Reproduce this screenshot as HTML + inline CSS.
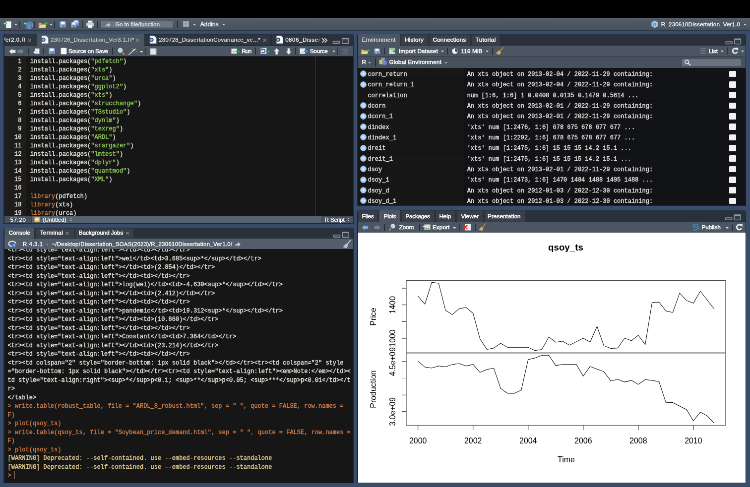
<!DOCTYPE html>
<html><head><meta charset="utf-8"><title>RStudio</title><style>
html,body{margin:0;padding:0;background:#000;}
body{width:750px;height:487px;overflow:hidden;position:relative;}
#app{position:absolute;left:0;top:0;width:1512px;height:982px;transform:scale(0.496032);transform-origin:0 0;overflow:hidden;will-change:transform;font-family:"Liberation Sans",sans-serif;}
#app div,#app pre{box-sizing:border-box;}
.m{font-family:"Liberation Mono",monospace;font-size:12px;-webkit-text-stroke:0.4px;}
.s{color:#8fcd58}.k{color:#d57d42}.n{color:#e6e1dc}
.o{color:#e6e1dc}.c{color:#d27d45}.w{color:#e4c98e}
</style></head><body><div id="app">
<div style="position:absolute;left:0.00px;top:0.00px;width:1512.00px;height:982.20px;background:#394c6b;"></div>
<div style="position:absolute;left:0.00px;top:0.00px;width:1512.00px;height:36.09px;background:#000;"></div>
<div style="position:absolute;left:0.00px;top:36.09px;width:1512.00px;height:23.59px;background:linear-gradient(#606a75 0,#525c68 10%,#485260 100%);"></div>
<div style="position:absolute;left:0.00px;top:59.67px;width:1512.00px;height:2.82px;background:#2b3646;"></div>
<div style="position:absolute;left:7.46px;top:68.14px;width:705.40px;height:382.44px;background:#1c2736;border-radius:4.5px 4.5px 0 0;"></div>
<div style="position:absolute;left:7.46px;top:458.84px;width:705.40px;height:515.09px;background:#1c2736;border-radius:4.5px 4.5px 0 0;"></div>
<div style="position:absolute;left:720.12px;top:68.14px;width:784.02px;height:346.55px;background:#1c2736;border-radius:4.5px 4.5px 0 0;"></div>
<div style="position:absolute;left:720.12px;top:423.56px;width:784.02px;height:550.37px;background:#1c2736;border-radius:4.5px 4.5px 0 0;"></div>
<svg style="position:absolute;left:29.23px;top:47.78px;overflow:visible" width="6.05" height="3.33" viewBox="0 0 6 3.3"><path d="M0 0 L6 0 L3 3.3 Z" fill="#dfe3e8"/></svg>
<div style="position:absolute;left:38.51px;top:41.93px;width:1.61px;height:13.71px;background:#27303a;"></div>
<div style="position:absolute;left:68.75px;top:41.93px;width:1.61px;height:13.71px;background:#27303a;"></div>
<svg style="position:absolute;left:100.20px;top:47.78px;overflow:visible" width="6.05" height="3.33" viewBox="0 0 6 3.3"><path d="M0 0 L6 0 L3 3.3 Z" fill="#dfe3e8"/></svg>
<div style="position:absolute;left:109.07px;top:41.93px;width:1.61px;height:13.71px;background:#27303a;"></div>
<div style="position:absolute;left:165.51px;top:41.93px;width:1.61px;height:13.71px;background:#27303a;"></div>
<div style="position:absolute;left:195.75px;top:41.93px;width:1.61px;height:13.71px;background:#27303a;"></div>
<div style="position:absolute;left:202.81px;top:42.34px;width:146.56px;height:13.91px;background:#6a7683;border-radius:1px;box-shadow:inset 0 0 0 0.6px #555f6b;"></div>
<svg style="position:absolute;left:210.87px;top:45.16px;overflow:visible" width="13.31" height="10.08" viewBox="0 0 12.6 11.6"><path d="M0 10.6 q0.6 -6.6 7 -6.6 v-3.6 l5.6 5.6 l-5.6 5.6 v-3.6 q-4.4 -0.6 -7 2.6z" fill="#b9c1ca"/></svg>
<div style="position:absolute;left:232.44px;top:41.39px;height:16px;line-height:16px;white-space:pre;font-family:'Liberation Sans', sans-serif;font-size:11px;color:#e4e7eb;-webkit-text-stroke:0.25px;letter-spacing:0.206px;-webkit-text-stroke:0.3px;">Go to file/function</div>
<div style="position:absolute;left:357.03px;top:41.33px;width:1.61px;height:15.12px;background:#27303a;"></div>
<svg style="position:absolute;left:367.52px;top:42.34px;overflow:visible" width="13.91" height="12.90" viewBox="0 0 14 14"><rect x="0" y="0" width="14" height="14" fill="#7d8792"/><rect x="1.3" y="1.3" width="5" height="5" fill="#a9b1ba"/><rect x="7.7" y="1.3" width="5" height="5" fill="#a9b1ba"/><rect x="1.3" y="7.7" width="5" height="5" fill="#a9b1ba"/><rect x="7.7" y="7.7" width="5" height="5" fill="#a9b1ba"/></svg>
<svg style="position:absolute;left:389.29px;top:47.78px;overflow:visible" width="6.05" height="3.33" viewBox="0 0 6 3.3"><path d="M0 0 L6 0 L3 3.3 Z" fill="#dfe3e8"/></svg>
<div style="position:absolute;left:403.80px;top:41.19px;height:16px;line-height:16px;white-space:pre;font-family:'Liberation Sans', sans-serif;font-size:12px;color:#fff;-webkit-text-stroke:0.25px;letter-spacing:0.033px;-webkit-text-stroke:0.35px;">Addins</div>
<svg style="position:absolute;left:448.16px;top:47.98px;overflow:visible" width="6.05" height="3.33" viewBox="0 0 6 3.3"><path d="M0 0 L6 0 L3 3.3 Z" fill="#dfe3e8"/></svg>
<svg style="position:absolute;left:1313.22px;top:41.13px;overflow:visible" width="14.11" height="15.72" viewBox="0 0 14 15.5"><path d="M7 0.5 L13.5 4 V11.5 L7 15 L0.5 11.5 V4Z" fill="#9fc3e0" stroke="#6e9cc4" stroke-width="0.8"/><text x="7" y="11.3" font-family="Liberation Sans" font-weight="bold" font-size="9" fill="#4a7fb0" text-anchor="middle">R</text></svg>
<div style="position:absolute;left:1332.78px;top:41.19px;height:16px;line-height:16px;white-space:pre;font-family:'Liberation Sans', sans-serif;font-size:11.5px;color:#fff;-webkit-text-stroke:0.25px;letter-spacing:0.223px;">R_230610Dissertation_Ver1.0</div>
<svg style="position:absolute;left:1498.69px;top:47.98px;overflow:visible" width="6.05" height="3.33" viewBox="0 0 6 3.3"><path d="M0 0 L6 0 L3 3.3 Z" fill="#dfe3e8"/></svg>
<div style="position:absolute;left:9.07px;top:68.34px;width:702.78px;height:23.99px;background:#29313b;border-radius:4px 4px 0 0;"></div>
<div style="position:absolute;left:9.07px;top:68.34px;width:64.11px;height:23.99px;background:#2d353f;border-radius:4px 0 0 0;overflow:hidden;"></div>
<div style="position:absolute;left:9.07px;top:68.54px;width:45.36px;height:23.18px;background:transparent;overflow:hidden;"><div style="position:absolute;left:-5.5px;top:3.89px;line-height:16px;font-family:'Liberation Sans', sans-serif;font-size:11.5px;-webkit-text-stroke:0.3px;color:#fff;white-space:pre;letter-spacing:0.45px">Ver2.0.R</div></div>
<div style="position:absolute;left:74.19px;top:68.34px;width:216.52px;height:24.80px;background:#4c5662;border-radius:3px 3px 0 0;"></div>
<div style="position:absolute;left:102.01px;top:72.24px;height:16px;line-height:16px;white-space:pre;font-family:'Liberation Sans', sans-serif;font-size:11.5px;color:#c3cad2;-webkit-text-stroke:0.25px;letter-spacing:0.263px;">230726_Dissertation_Ver3.1.R*</div>
<div style="position:absolute;left:291.72px;top:68.95px;width:254.62px;height:23.39px;background:#2d353f;box-shadow:inset 0 0 0 0.6px #222931;"></div>
<div style="position:absolute;left:320.14px;top:72.24px;height:16px;line-height:16px;white-space:pre;font-family:'Liberation Sans', sans-serif;font-size:11.5px;color:#e3e7eb;-webkit-text-stroke:0.25px;letter-spacing:0.243px;">230728_DissertationCovariance_ve...*</div>
<div style="position:absolute;left:547.34px;top:68.95px;width:99.79px;height:23.39px;background:#2d353f;box-shadow:inset 0 0 0 0.6px #222931;"></div>
<div style="position:absolute;left:575.16px;top:70.56px;width:71.97px;height:20.16px;background:transparent;overflow:hidden;"><div style="position:absolute;left:0;top:1.68px;line-height:16px;font-family:'Liberation Sans', sans-serif;font-size:11.5px;color:#fff;-webkit-text-stroke:0.25px;white-space:pre;letter-spacing:0.55px">0806_Dissertation</div><div style="position:absolute;right:0;top:0;width:9px;height:100%;background:linear-gradient(90deg,rgba(45,53,63,0),#2d353f)"></div></div>
<div style="position:absolute;left:9.07px;top:92.74px;width:702.78px;height:20.76px;background:#4c5662;"></div>
<svg style="position:absolute;left:18.14px;top:97.57px;overflow:visible" width="13.71" height="11.29" viewBox="0 0 13.6 11.2"><path d="M0.6 5.6 L6.4 0.4 V2.8 H13 V8.4 H6.4 V10.8 Z" fill="#e9edf1" stroke="#aab1b9" stroke-width="0.7"/></svg>
<svg style="position:absolute;left:35.28px;top:97.57px;overflow:visible" width="13.71" height="11.29" viewBox="0 0 13.6 11.2"><path d="M13 5.6 L7.2 0.4 V2.8 H0.6 V8.4 H7.2 V10.8 Z" fill="#78828d" stroke="#6a747f" stroke-width="0.7"/></svg>
<div style="position:absolute;left:56.65px;top:95.96px;width:1.61px;height:14.52px;background:#27303a;"></div>
<svg style="position:absolute;left:66.12px;top:97.37px;overflow:visible" width="14.52" height="11.89" viewBox="0 0 15 13.6"><rect x="4" y="1" width="10.5" height="12" fill="#e9edf1" stroke="#9aa3ad" stroke-width="0.6"/><path d="M0.5 9.5 L4.5 6 V8 H7.5 V11 H4.5 V13Z" fill="#fff" stroke="#7d8792" stroke-width="0.5"/></svg>
<div style="position:absolute;left:86.89px;top:95.96px;width:1.61px;height:14.52px;background:#27303a;"></div>
<div style="position:absolute;left:122.57px;top:96.97px;width:11.89px;height:12.30px;background:#fafafa;border-radius:1.2px;box-shadow:0 0 0 0.5px #c4c9cf;"></div>
<div style="position:absolute;left:137.89px;top:95.22px;height:16px;line-height:16px;white-space:pre;font-family:'Liberation Sans', sans-serif;font-size:11.8px;color:#fff;-webkit-text-stroke:0.25px;letter-spacing:-0.281px;-webkit-text-stroke:0.55px;">Source on Save</div>
<div style="position:absolute;left:225.99px;top:95.96px;width:1.61px;height:14.52px;background:#27303a;"></div>
<svg style="position:absolute;left:236.88px;top:95.96px;overflow:visible" width="14.72" height="14.92" viewBox="0 0 14.6 14.8"><circle cx="5.4" cy="5.4" r="4.2" fill="#b9d6f0" stroke="#dfe5ec" stroke-width="1.3"/><path d="M8.6 8.6 L13.4 13.8" stroke="#b08a4f" stroke-width="2.4" stroke-linecap="round"/></svg>
<svg style="position:absolute;left:259.46px;top:95.96px;overflow:visible" width="17.94" height="14.92" viewBox="0 0 18 15"><path d="M1 14 L12 4" stroke="#c9ced4" stroke-width="1.8" stroke-linecap="round"/><path d="M9.6 6.2 L12 4" stroke="#f3f3f3" stroke-width="2.2" stroke-linecap="round"/><path d="M14 1 l0.6 1.6 l1.6 0.6 l-1.6 0.6 l-0.6 1.6 l-0.6 -1.6 l-1.6 -0.6 l1.6 -0.6z M8 0.5 l0.4 1 l1 0.4 l-1 0.4 l-0.4 1 l-0.4 -1 l-1 -0.4 l1 -0.4z M16 7 l0.4 1 l1 0.4 l-1 0.4 l-0.4 1 l-0.4 -1 l-1 -0.4 l1 -0.4z" fill="#e9c76b"/></svg>
<svg style="position:absolute;left:281.84px;top:103.22px;overflow:visible" width="6.05" height="3.33" viewBox="0 0 6 3.3"><path d="M0 0 L6 0 L3 3.3 Z" fill="#dfe3e8"/></svg>
<div style="position:absolute;left:292.52px;top:95.96px;width:1.61px;height:14.52px;background:#27303a;"></div>
<svg style="position:absolute;left:302.40px;top:96.57px;overflow:visible" width="13.71" height="13.91" viewBox="0 0 13.6 13.8"><rect x="0.5" y="0.5" width="12.6" height="12.8" rx="1" fill="#cfd4da" stroke="#8e98a3" stroke-width="0.8"/><rect x="2.4" y="2.6" width="8.8" height="8.6" fill="#e4e7ea"/></svg>
<svg style="position:absolute;left:466.30px;top:97.17px;overflow:visible" width="17.94" height="12.50" viewBox="0 0 18 12.4"><rect x="0.5" y="1" width="11" height="10" fill="#f4f5f6" stroke="#9aa3ad" stroke-width="0.7"/><path d="M2.4 4 h7 M2.4 6.5 h7 M2.4 9 h5" stroke="#9aa3ad" stroke-width="0.8"/><path d="M10 6 h4 v-2.6 l4 3.6 l-4 3.6 v-2.6 h-4z" fill="#2fa84f" stroke="#14602a" stroke-width="0.4"/></svg>
<div style="position:absolute;left:487.27px;top:95.22px;height:16px;line-height:16px;white-space:pre;font-family:'Liberation Sans', sans-serif;font-size:11.8px;color:#fff;-webkit-text-stroke:0.25px;letter-spacing:-0.765px;-webkit-text-stroke:0.55px;">Run</div>
<div style="position:absolute;left:514.28px;top:95.96px;width:1.61px;height:14.52px;background:#27303a;"></div>
<svg style="position:absolute;left:524.76px;top:96.36px;overflow:visible" width="19.76" height="14.11" viewBox="0 0 19.6 14"><rect x="0.5" y="0.8" width="11.6" height="11.6" fill="#eef1f4" stroke="#8e98a3" stroke-width="0.7"/><path d="M3 4.4 a3.6 3.6 0 1 1 -0.4 4" stroke="#2c4f8a" stroke-width="1.9" fill="none"/><path d="M0.8 1.6 L5.8 2.6 L2.6 6.8Z" fill="#2c4f8a"/><path d="M11.4 7 h3.6 v-2.4 l4 3.4 l-4 3.4 v-2.4 h-3.6z" fill="#2fa84f" stroke="#14602a" stroke-width="0.4"/></svg>
<svg style="position:absolute;left:551.78px;top:96.77px;overflow:visible" width="11.49" height="13.31" viewBox="0 0 11.4 13.2"><path d="M5.7 0.6 L11 6.2 H7.9 V12.6 H3.5 V6.2 H0.4Z" fill="#f1f3f5" stroke="#aab1b9" stroke-width="0.6"/></svg>
<svg style="position:absolute;left:576.17px;top:96.77px;overflow:visible" width="12.10" height="13.31" viewBox="0 0 11.4 13.2"><path d="M5.7 12.6 L11 7 H7.9 V0.6 H3.5 V7 H0.4Z" fill="#f1f3f5" stroke="#aab1b9" stroke-width="0.6"/></svg>
<div style="position:absolute;left:594.92px;top:95.96px;width:1.61px;height:14.52px;background:#27303a;"></div>
<svg style="position:absolute;left:604.40px;top:97.17px;overflow:visible" width="18.14" height="12.50" viewBox="0 0 18 12.4"><rect x="0.5" y="0.6" width="10.5" height="11" fill="#f4f5f6" stroke="#9aa3ad" stroke-width="0.7"/><path d="M2.4 3.4 h6.6 M2.4 6 h6.6 M2.4 8.6 h6.6" stroke="#aab1b9" stroke-width="0.8"/><path d="M9 5 h4.4 v-2.6 l4.2 3.8 l-4.2 3.8 v-2.6 h-4.4z" fill="#4a8fd6" stroke="#1f5a9c" stroke-width="0.4"/></svg>
<div style="position:absolute;left:624.76px;top:95.22px;height:16px;line-height:16px;white-space:pre;font-family:'Liberation Sans', sans-serif;font-size:11.8px;color:#fff;-webkit-text-stroke:0.25px;letter-spacing:-0.284px;-webkit-text-stroke:0.55px;">Source</div>
<svg style="position:absolute;left:669.92px;top:102.41px;overflow:visible" width="6.05" height="3.33" viewBox="0 0 6 3.3"><path d="M0 0 L6 0 L3 3.3 Z" fill="#dfe3e8"/></svg>
<div style="position:absolute;left:679.59px;top:95.96px;width:1.61px;height:14.52px;background:#27303a;"></div>
<svg style="position:absolute;left:690.28px;top:97.98px;overflow:visible" width="11.69" height="10.48" viewBox="0 0 11.6 10.4"><path d="M0 1.2 h11.6 M3 5.2 h8.6 M0 9.2 h11.6" stroke="#6d7783" stroke-width="1.5"/></svg>
<div style="position:absolute;left:9.07px;top:113.50px;width:702.78px;height:321.75px;background:#161616;"></div>
<div style="position:absolute;left:9.07px;top:113.50px;width:44.15px;height:321.75px;background:#1f1d1c;"></div>
<div style="position:absolute;left:636.05px;top:113.50px;width:1.41px;height:321.75px;background:#3c3c3c;"></div>
<div style="position:absolute;left:9.07px;top:113.50px;width:702.78px;height:321.75px;overflow:hidden;font-family:'Liberation Mono', monospace;font-size:12px;line-height:17px;color:#e6e1dc"><pre class="m" style="position:absolute;left:9.27px;top:2.39px;width:25.20px;text-align:right;color:#e6e1dc;margin:0">1
2
3
4
5
6
7
8
9
10
11
12
13
14
15
16
17
18
19</pre><pre class="m" style="position:absolute;left:51.81px;top:2.39px;margin:0">install.packages(<span class="s">"pdfetch"</span>)
install.packages(<span class="s">"xts"</span>)
install.packages(<span class="s">"urca"</span>)
install.packages(<span class="s">"ggplot2"</span>)
install.packages(<span class="s">"xts"</span>)
install.packages(<span class="s">"strucchange"</span>)
install.packages(<span class="s">"TSstudio"</span>)
install.packages(<span class="s">"dynlm"</span>)
install.packages(<span class="s">"texreg"</span>)
install.packages(<span class="s">"ARDL"</span>)
install.packages(<span class="s">"srargazer"</span>)
install.packages(<span class="s">"lmtest"</span>)
install.packages(<span class="s">"dplyr"</span>)
install.packages(<span class="s">"quantmod"</span>)
install.packages(<span class="s">"XML"</span>)

<span class="k">library</span>(<span class="n">pdfetch</span>)
<span class="k">library</span>(<span class="n">xts</span>)
<span class="k">library</span>(<span class="n">urca</span>)</pre></div>
<div style="position:absolute;left:9.07px;top:435.46px;width:702.78px;height:14.31px;background:#566270;"></div>
<div style="position:absolute;left:9.07px;top:435.46px;width:55.04px;height:14.31px;background:#47515e;"></div>
<div style="position:absolute;left:20.76px;top:434.92px;height:16px;line-height:16px;white-space:pre;font-family:'Liberation Sans', sans-serif;font-size:11.2px;color:#fff;-webkit-text-stroke:0.25px;letter-spacing:0.725px;-webkit-text-stroke:0.35px;">57:20</div>
<div style="position:absolute;left:62.70px;top:436.26px;width:1.61px;height:12.90px;background:#39434f;"></div>
<svg style="position:absolute;left:69.35px;top:437.27px;overflow:visible" width="11.49" height="11.09" viewBox="0 0 11.4 10.8"><rect x="0.4" y="0.4" width="10.6" height="10" rx="1" fill="#e9b44c" stroke="#b98a2e" stroke-width="0.6"/><path d="M2 3 h7.4 M2 5.4 h7.4 M2 7.8 h5" stroke="#fff3d6" stroke-width="0.9"/></svg>
<div style="position:absolute;left:86.08px;top:434.92px;height:16px;line-height:16px;white-space:pre;font-family:'Liberation Sans', sans-serif;font-size:11.2px;color:#fff;-webkit-text-stroke:0.25px;letter-spacing:0.254px;-webkit-text-stroke:0.35px;">(Untitled)</div>
<svg style="position:absolute;left:140.52px;top:439.29px;overflow:visible" width="4.44" height="7.26" viewBox="0 0 4.4 7.2"><path d="M0.4 2.6 L2.2 0.4 L4 2.6Z M0.4 4.6 L2.2 6.8 L4 4.6Z" fill="#c9ced4"/></svg>
<div style="position:absolute;left:647.74px;top:435.86px;width:63.91px;height:13.71px;background:#4a5461;box-shadow:inset 0 0 0 0.5px #3b4551;border-radius:1px;"></div>
<div style="position:absolute;left:654.80px;top:434.92px;height:16px;line-height:16px;white-space:pre;font-family:'Liberation Sans', sans-serif;font-size:11.2px;color:#fff;-webkit-text-stroke:0.25px;letter-spacing:-0.014px;-webkit-text-stroke:0.35px;">R Script</div>
<svg style="position:absolute;left:700.36px;top:439.29px;overflow:visible" width="4.44" height="7.26" viewBox="0 0 4.4 7.2"><path d="M0.4 2.6 L2.2 0.4 L4 2.6Z M0.4 4.6 L2.2 6.8 L4 4.6Z" fill="#c9ced4"/></svg>
<div style="position:absolute;left:9.07px;top:459.04px;width:702.78px;height:22.38px;background:#29313b;border-radius:4px 4px 0 0;"></div>
<div style="position:absolute;left:9.07px;top:459.04px;width:59.88px;height:22.78px;background:#4c5662;border-radius:3px 3px 0 0;"></div>
<div style="position:absolute;left:17.54px;top:461.32px;height:16px;line-height:16px;white-space:pre;font-family:'Liberation Sans', sans-serif;font-size:11.8px;color:#fff;-webkit-text-stroke:0.25px;letter-spacing:0.036px;-webkit-text-stroke:0.55px;">Console</div>
<div style="position:absolute;left:70.56px;top:459.65px;width:79.03px;height:21.77px;background:#373f48;box-shadow:inset 0 0 0 0.6px #252c35;"></div>
<div style="position:absolute;left:80.64px;top:461.32px;height:16px;line-height:16px;white-space:pre;font-family:'Liberation Sans', sans-serif;font-size:11.8px;color:#fff;-webkit-text-stroke:0.25px;letter-spacing:0.222px;-webkit-text-stroke:0.55px;">Terminal</div>
<div style="position:absolute;left:151.20px;top:459.65px;width:118.74px;height:21.77px;background:#373f48;box-shadow:inset 0 0 0 0.6px #252c35;"></div>
<div style="position:absolute;left:158.66px;top:461.32px;height:16px;line-height:16px;white-space:pre;font-family:'Liberation Sans', sans-serif;font-size:11.8px;color:#fff;-webkit-text-stroke:0.25px;letter-spacing:-0.098px;-webkit-text-stroke:0.55px;">Background Jobs</div>
<div style="position:absolute;left:9.07px;top:481.42px;width:702.78px;height:20.56px;background:#535e6a;"></div>
<svg style="position:absolute;left:16.73px;top:484.65px;overflow:visible" width="17.14" height="14.52" viewBox="0 0 17 14.4"><ellipse cx="7.6" cy="6.4" rx="7" ry="5" fill="none" stroke="#e8ecf0" stroke-width="2.4"/><rect x="7" y="5.6" width="8.4" height="8" rx="1.2" fill="#2f6fd0"/><text x="11.2" y="12.4" font-size="7.5" font-weight="bold" font-family="Liberation Sans" fill="#9cc0f5" text-anchor="middle">R</text></svg>
<div style="position:absolute;left:45.96px;top:483.90px;height:16px;line-height:16px;white-space:pre;font-family:'Liberation Sans', sans-serif;font-size:11.4px;color:#fff;-webkit-text-stroke:0.25px;letter-spacing:0.567px;-webkit-text-stroke:0.35px;">R 4.3.1</div>
<div style="position:absolute;left:93.95px;top:483.90px;height:16px;line-height:16px;white-space:pre;font-family:'Liberation Sans', sans-serif;font-size:11px;color:#c9ced4;-webkit-text-stroke:0.25px;">·</div>
<div style="position:absolute;left:104.23px;top:483.90px;height:16px;line-height:16px;white-space:pre;font-family:'Liberation Sans', sans-serif;font-size:11.4px;color:#fff;-webkit-text-stroke:0.25px;letter-spacing:0.324px;-webkit-text-stroke:0.35px;">~/Desktop/Dissertation_SOAS(2023)/R_230610Dissertation_Ver1.0/</div>
<svg style="position:absolute;left:473.16px;top:486.66px;overflow:visible" width="12.30" height="10.48" viewBox="0 0 12.2 10.4"><path d="M0.6 10 q0.4 -6 6 -6 v-3.4 l5.2 5 l-5.2 5 v-3.4 q-4 -0.4 -6 2.8z" fill="#c9ced4"/></svg>
<div style="position:absolute;left:9.07px;top:501.98px;width:702.78px;height:471.14px;background:#161616;"></div>
<div style="position:absolute;left:9.07px;top:501.98px;width:702.78px;height:471.14px;overflow:hidden;font-family:'Liberation Mono', monospace;font-size:12px;line-height:17.5px;color:#e6e1dc"><pre class="m" style="position:absolute;left:6.45px;top:-5.92px;margin:0"><span class="o">&lt;tr&gt;&lt;td style="text-align:left"&gt;&lt;/td&gt;&lt;td&gt;&lt;/td&gt;&lt;/tr&gt;</span>
<span class="o">&lt;tr&gt;&lt;td style="text-align:left"&gt;wei&lt;/td&gt;&lt;td&gt;3.685&lt;sup&gt;*&lt;/sup&gt;&lt;/td&gt;&lt;/tr&gt;</span>
<span class="o">&lt;tr&gt;&lt;td style="text-align:left"&gt;&lt;/td&gt;&lt;td&gt;(2.854)&lt;/td&gt;&lt;/tr&gt;</span>
<span class="o">&lt;tr&gt;&lt;td style="text-align:left"&gt;&lt;/td&gt;&lt;td&gt;&lt;/td&gt;&lt;/tr&gt;</span>
<span class="o">&lt;tr&gt;&lt;td style="text-align:left"&gt;log(wei)&lt;/td&gt;&lt;td&gt;-4.630&lt;sup&gt;*&lt;/sup&gt;&lt;/td&gt;&lt;/tr&gt;</span>
<span class="o">&lt;tr&gt;&lt;td style="text-align:left"&gt;&lt;/td&gt;&lt;td&gt;(2.412)&lt;/td&gt;&lt;/tr&gt;</span>
<span class="o">&lt;tr&gt;&lt;td style="text-align:left"&gt;&lt;/td&gt;&lt;td&gt;&lt;/td&gt;&lt;/tr&gt;</span>
<span class="o">&lt;tr&gt;&lt;td style="text-align:left"&gt;pandemic&lt;/td&gt;&lt;td&gt;19.312&lt;sup&gt;*&lt;/sup&gt;&lt;/td&gt;&lt;/tr&gt;</span>
<span class="o">&lt;tr&gt;&lt;td style="text-align:left"&gt;&lt;/td&gt;&lt;td&gt;(10.860)&lt;/td&gt;&lt;/tr&gt;</span>
<span class="o">&lt;tr&gt;&lt;td style="text-align:left"&gt;&lt;/td&gt;&lt;td&gt;&lt;/td&gt;&lt;/tr&gt;</span>
<span class="o">&lt;tr&gt;&lt;td style="text-align:left"&gt;Constant&lt;/td&gt;&lt;td&gt;7.364&lt;/td&gt;&lt;/tr&gt;</span>
<span class="o">&lt;tr&gt;&lt;td style="text-align:left"&gt;&lt;/td&gt;&lt;td&gt;(23.214)&lt;/td&gt;&lt;/tr&gt;</span>
<span class="o">&lt;tr&gt;&lt;td style="text-align:left"&gt;&lt;/td&gt;&lt;td&gt;&lt;/td&gt;&lt;/tr&gt;</span>
<span class="o">&lt;tr&gt;&lt;td colspan="2" style="border-bottom: 1px solid black"&gt;&lt;/td&gt;&lt;/tr&gt;&lt;tr&gt;&lt;td colspan="2" style</span>
<span class="o">="border-bottom: 1px solid black"&gt;&lt;/td&gt;&lt;/tr&gt;&lt;tr&gt;&lt;td style="text-align:left"&gt;&lt;em&gt;Note:&lt;/em&gt;&lt;/td&gt;&lt;</span>
<span class="o">td style="text-align:right"&gt;&lt;sup&gt;*&lt;/sup&gt;p&lt;0.1; &lt;sup&gt;**&lt;/sup&gt;p&lt;0.05; &lt;sup&gt;***&lt;/sup&gt;p&lt;0.01&lt;/td&gt;&lt;/t</span>
<span class="o">r&gt;</span>
<span class="o">&lt;/table&gt;</span>
<span class="c">&gt; write.table(robust_table, file = "ARDL_8_robust.html", sep = " ", quote = FALSE, row.names =</span>
<span class="c">F)</span>
<span class="c">&gt; plot(qsoy_ts)</span>
<span class="c">&gt; write.table(qsoy_ts, file = "Soybean_price_demand.html", sep = " ", quote = FALSE, row.names =</span>
<span class="c">F)</span>
<span class="c">&gt; plot(qsoy_ts)</span>
<span class="w">[WARNING] Deprecated: --self-contained. use --embed-resources --standalone</span>
<span class="w">[WARNING] Deprecated: --self-contained. use --embed-resources --standalone</span>
<span class="c">&gt; </span>
</pre><div style="position:absolute;left:20.16px;top:446.75px;width:1px;height:17.34px;background:#8a7a6a"></div></div>
<div style="position:absolute;left:721.73px;top:68.34px;width:781.40px;height:23.99px;background:#29313b;border-radius:4px 4px 0 0;"></div>
<div style="position:absolute;left:721.73px;top:68.34px;width:84.27px;height:24.39px;background:#4c5662;border-radius:3px 3px 0 0;"></div>
<div style="position:absolute;left:729.79px;top:72.24px;height:16px;line-height:16px;white-space:pre;font-family:'Liberation Sans', sans-serif;font-size:11.8px;color:#dfe3e7;-webkit-text-stroke:0.25px;letter-spacing:0.117px;-webkit-text-stroke:0.3px;">Environment</div>
<div style="position:absolute;left:808.21px;top:68.95px;width:55.04px;height:22.98px;background:#373f48;box-shadow:inset 0 0 0 0.6px #252c35;border-radius:2px 2px 0 0;"></div>
<div style="position:absolute;left:815.88px;top:72.24px;height:16px;line-height:16px;white-space:pre;font-family:'Liberation Sans', sans-serif;font-size:11.8px;color:#fff;-webkit-text-stroke:0.25px;letter-spacing:0.227px;-webkit-text-stroke:0.55px;">History</div>
<div style="position:absolute;left:864.86px;top:68.95px;width:83.06px;height:22.98px;background:#373f48;box-shadow:inset 0 0 0 0.6px #252c35;border-radius:2px 2px 0 0;"></div>
<div style="position:absolute;left:872.52px;top:72.24px;height:16px;line-height:16px;white-space:pre;font-family:'Liberation Sans', sans-serif;font-size:11.8px;color:#fff;-webkit-text-stroke:0.25px;letter-spacing:0.103px;-webkit-text-stroke:0.55px;">Connections</div>
<div style="position:absolute;left:949.94px;top:68.95px;width:58.06px;height:22.98px;background:#373f48;box-shadow:inset 0 0 0 0.6px #252c35;border-radius:2px 2px 0 0;"></div>
<div style="position:absolute;left:958.61px;top:72.24px;height:16px;line-height:16px;white-space:pre;font-family:'Liberation Sans', sans-serif;font-size:11.8px;color:#fff;-webkit-text-stroke:0.25px;letter-spacing:0.252px;-webkit-text-stroke:0.55px;">Tutorial</div>
<div style="position:absolute;left:721.73px;top:92.33px;width:781.40px;height:20.97px;background:#4c5662;"></div>
<div style="position:absolute;left:774.35px;top:95.56px;width:1.61px;height:14.92px;background:#27303a;"></div>
<svg style="position:absolute;left:783.62px;top:96.36px;overflow:visible" width="13.91" height="13.71" viewBox="0 0 14.6 13.6"><rect x="0.5" y="0.5" width="12.8" height="12.6" fill="#eef1f4" stroke="#7d8792" stroke-width="0.8"/><path d="M0.5 4.6 h12.8 M0.5 8.8 h12.8 M4.8 0.5 v12.6 M9 0.5 v12.6" stroke="#7d8792" stroke-width="0.7"/><rect x="0.9" y="0.9" width="12" height="3.0" fill="#8fc48f"/><path d="M8 6.6 h3.4 v-2 l3 2.8 l-3 2.8 v-2 h-3.4z" fill="#35a853" stroke="#14602a" stroke-width="0.3"/></svg>
<div style="position:absolute;left:803.98px;top:95.02px;height:16px;line-height:16px;white-space:pre;font-family:'Liberation Sans', sans-serif;font-size:11.8px;color:#fff;-webkit-text-stroke:0.25px;letter-spacing:0.103px;-webkit-text-stroke:0.55px;">Import Dataset</div>
<svg style="position:absolute;left:889.06px;top:102.21px;overflow:visible" width="6.05" height="3.33" viewBox="0 0 6 3.3"><path d="M0 0 L6 0 L3 3.3 Z" fill="#dfe3e8"/></svg>
<div style="position:absolute;left:901.35px;top:95.56px;width:1.61px;height:14.92px;background:#27303a;"></div>
<svg style="position:absolute;left:911.23px;top:96.77px;overflow:visible" width="12.30" height="12.30" viewBox="0 0 12 12"><circle cx="6" cy="6" r="5.4" fill="#f3f5f7" stroke="#c3c9d0" stroke-width="0.6"/><path d="M6 6 L6 0.6 A5.4 5.4 0 0 1 10.6 8.8Z" fill="#4a5563"/></svg>
<div style="position:absolute;left:929.58px;top:95.02px;height:16px;line-height:16px;white-space:pre;font-family:'Liberation Sans', sans-serif;font-size:11.8px;color:#fff;-webkit-text-stroke:0.25px;letter-spacing:0.104px;-webkit-text-stroke:0.55px;">116 MiB</div>
<svg style="position:absolute;left:979.37px;top:102.21px;overflow:visible" width="6.05" height="3.33" viewBox="0 0 6 3.3"><path d="M0 0 L6 0 L3 3.3 Z" fill="#dfe3e8"/></svg>
<div style="position:absolute;left:992.07px;top:95.56px;width:1.61px;height:14.92px;background:#27303a;"></div>
<svg style="position:absolute;left:1411.60px;top:96.77px;overflow:visible" width="10.68" height="11.69" viewBox="0 0 10.6 12"><path d="M0 1 h10.6 M0 4.6 h10.6 M0 8.2 h10.6 M0 11.4 h10.6" stroke="#7c8692" stroke-width="1.3"/></svg>
<div style="position:absolute;left:1428.74px;top:95.02px;height:16px;line-height:16px;white-space:pre;font-family:'Liberation Sans', sans-serif;font-size:11.8px;color:#fff;-webkit-text-stroke:0.25px;letter-spacing:-0.055px;-webkit-text-stroke:0.55px;">List</div>
<svg style="position:absolute;left:1453.33px;top:102.21px;overflow:visible" width="6.05" height="3.33" viewBox="0 0 6 3.3"><path d="M0 0 L6 0 L3 3.3 Z" fill="#dfe3e8"/></svg>
<div style="position:absolute;left:1465.83px;top:95.56px;width:1.61px;height:14.92px;background:#27303a;"></div>
<svg style="position:absolute;left:1475.31px;top:95.56px;overflow:visible" width="13.31" height="13.10" viewBox="0 0 13.4 13.2"><path d="M10.4 3.6 A4.7 4.7 0 1 0 11.2 8.6" fill="none" stroke="#e6eaee" stroke-width="2.9"/><path d="M7.6 0.2 L13.2 0.2 L13.2 6.2Z" fill="#e6eaee"/></svg>
<svg style="position:absolute;left:1493.86px;top:102.21px;overflow:visible" width="6.05" height="3.33" viewBox="0 0 6 3.3"><path d="M0 0 L6 0 L3 3.3 Z" fill="#dfe3e8"/></svg>
<div style="position:absolute;left:721.73px;top:113.90px;width:781.40px;height:22.78px;background:#47515d;"></div>
<div style="position:absolute;left:721.73px;top:113.30px;width:781.40px;height:0.81px;background:#333c47;"></div>
<div style="position:absolute;left:729.39px;top:117.19px;height:16px;line-height:16px;white-space:pre;font-family:'Liberation Sans', sans-serif;font-size:11.8px;color:#fff;-webkit-text-stroke:0.25px;letter-spacing:-1.466px;-webkit-text-stroke:0.55px;">R</div>
<svg style="position:absolute;left:741.89px;top:124.59px;overflow:visible" width="6.05" height="3.33" viewBox="0 0 6 3.3"><path d="M0 0 L6 0 L3 3.3 Z" fill="#aeb5bd"/></svg>
<div style="position:absolute;left:756.20px;top:116.93px;width:1.61px;height:16.93px;background:#27303a;"></div>
<div style="position:absolute;left:784.43px;top:117.19px;height:16px;line-height:16px;white-space:pre;font-family:'Liberation Sans', sans-serif;font-size:11.8px;color:#fff;-webkit-text-stroke:0.25px;letter-spacing:0.111px;-webkit-text-stroke:0.55px;">Global Environment</div>
<svg style="position:absolute;left:896.11px;top:124.59px;overflow:visible" width="6.05" height="3.33" viewBox="0 0 6 3.3"><path d="M0 0 L6 0 L3 3.3 Z" fill="#aeb5bd"/></svg>
<div style="position:absolute;left:1374.91px;top:118.54px;width:118.94px;height:14.52px;background:#69737f;border-radius:1.5px;"></div>
<svg style="position:absolute;left:1380.15px;top:120.15px;overflow:visible" width="12.50" height="12.10" viewBox="0 0 12.4 12"><circle cx="4.8" cy="4.8" r="3.6" fill="none" stroke="#e3e7ec" stroke-width="1.7"/><path d="M7.4 7.4 L11.4 11.2" stroke="#e3e7ec" stroke-width="2.2" stroke-linecap="round"/></svg>
<div style="position:absolute;left:721.73px;top:136.68px;width:781.40px;height:277.20px;background:#111317;"></div>
<div style="position:absolute;left:721.73px;top:136.68px;width:214.50px;height:277.20px;background:#181717;"></div>
<div style="position:absolute;left:721.73px;top:136.68px;width:781.40px;height:277.20px;overflow:hidden;font-family:'Liberation Mono', monospace;font-size:12px;color:#e6e1dc"><div style="position:absolute;left:0;top:22.86px;width:100%;height:1px;background:rgba(0,0,0,0.18)"></div><svg style="position:absolute;left:4.44px;top:5.80px" width="13" height="13" viewBox="0 0 12.2 12.2"><circle cx="6.1" cy="6.1" r="5.6" fill="#b0cdf0" stroke="#86abdc" stroke-width="0.9"/><path d="M4.6 3.6 L8.8 6.1 L4.6 8.6Z" fill="#eaf3fc"/></svg><div class="m" style="position:absolute;left:19.76px;top:5.50px;line-height:17px;white-space:pre">corn_return</div><div class="m" style="position:absolute;left:219.95px;top:5.50px;line-height:17px;white-space:pre">An xts object on 2013-02-04 / 2022-11-29 containing:</div><div style="position:absolute;left:748.74px;top:6.10px;width:13.10px;height:12.70px;background:#f2f2f2;border-radius:1.5px"></div><div style="position:absolute;left:0;top:44.18px;width:100%;height:1px;background:rgba(0,0,0,0.18)"></div><svg style="position:absolute;left:4.44px;top:27.12px" width="13" height="13" viewBox="0 0 12.2 12.2"><circle cx="6.1" cy="6.1" r="5.6" fill="#b0cdf0" stroke="#86abdc" stroke-width="0.9"/><path d="M4.6 3.6 L8.8 6.1 L4.6 8.6Z" fill="#eaf3fc"/></svg><div class="m" style="position:absolute;left:19.76px;top:26.82px;line-height:17px;white-space:pre">corn_return_1</div><div class="m" style="position:absolute;left:219.95px;top:26.82px;line-height:17px;white-space:pre">An xts object on 2013-02-04 / 2022-11-29 containing:</div><div style="position:absolute;left:748.74px;top:27.42px;width:13.10px;height:12.70px;background:#f2f2f2;border-radius:1.5px"></div><div style="position:absolute;left:0;top:65.50px;width:100%;height:1px;background:rgba(0,0,0,0.18)"></div><div class="m" style="position:absolute;left:19.76px;top:48.14px;line-height:17px;white-space:pre">correlation</div><div class="m" style="position:absolute;left:219.95px;top:48.14px;line-height:17px;white-space:pre">num [1:6, 1:6] 1 0.0408 0.0135 0.1479 0.5614 ...</div><div style="position:absolute;left:748.74px;top:48.74px;width:13.10px;height:12.70px;background:#f2f2f2;border-radius:1.5px"></div><div style="position:absolute;left:0;top:86.82px;width:100%;height:1px;background:rgba(0,0,0,0.18)"></div><svg style="position:absolute;left:4.44px;top:69.76px" width="13" height="13" viewBox="0 0 12.2 12.2"><circle cx="6.1" cy="6.1" r="5.6" fill="#b0cdf0" stroke="#86abdc" stroke-width="0.9"/><path d="M4.6 3.6 L8.8 6.1 L4.6 8.6Z" fill="#eaf3fc"/></svg><div class="m" style="position:absolute;left:19.76px;top:69.46px;line-height:17px;white-space:pre">dcorn</div><div class="m" style="position:absolute;left:219.95px;top:69.46px;line-height:17px;white-space:pre">An xts object on 2013-02-01 / 2022-11-29 containing:</div><div style="position:absolute;left:748.74px;top:70.06px;width:13.10px;height:12.70px;background:#f2f2f2;border-radius:1.5px"></div><div style="position:absolute;left:0;top:108.14px;width:100%;height:1px;background:rgba(0,0,0,0.18)"></div><svg style="position:absolute;left:4.44px;top:91.08px" width="13" height="13" viewBox="0 0 12.2 12.2"><circle cx="6.1" cy="6.1" r="5.6" fill="#b0cdf0" stroke="#86abdc" stroke-width="0.9"/><path d="M4.6 3.6 L8.8 6.1 L4.6 8.6Z" fill="#eaf3fc"/></svg><div class="m" style="position:absolute;left:19.76px;top:90.78px;line-height:17px;white-space:pre">dcorn_1</div><div class="m" style="position:absolute;left:219.95px;top:90.78px;line-height:17px;white-space:pre">An xts object on 2013-02-01 / 2022-11-29 containing:</div><div style="position:absolute;left:748.74px;top:91.38px;width:13.10px;height:12.70px;background:#f2f2f2;border-radius:1.5px"></div><div style="position:absolute;left:0;top:129.46px;width:100%;height:1px;background:rgba(0,0,0,0.18)"></div><svg style="position:absolute;left:4.44px;top:112.40px" width="13" height="13" viewBox="0 0 12.2 12.2"><circle cx="6.1" cy="6.1" r="5.6" fill="#b0cdf0" stroke="#86abdc" stroke-width="0.9"/><path d="M4.6 3.6 L8.8 6.1 L4.6 8.6Z" fill="#eaf3fc"/></svg><div class="m" style="position:absolute;left:19.76px;top:112.10px;line-height:17px;white-space:pre">dindex</div><div class="m" style="position:absolute;left:219.95px;top:112.10px;line-height:17px;white-space:pre">'xts' num [1:2476, 1:6] 678 675 678 677 677 ...</div><div style="position:absolute;left:748.74px;top:112.70px;width:13.10px;height:12.70px;background:#f2f2f2;border-radius:1.5px"></div><div style="position:absolute;left:0;top:150.78px;width:100%;height:1px;background:rgba(0,0,0,0.18)"></div><svg style="position:absolute;left:4.44px;top:133.72px" width="13" height="13" viewBox="0 0 12.2 12.2"><circle cx="6.1" cy="6.1" r="5.6" fill="#b0cdf0" stroke="#86abdc" stroke-width="0.9"/><path d="M4.6 3.6 L8.8 6.1 L4.6 8.6Z" fill="#eaf3fc"/></svg><div class="m" style="position:absolute;left:19.76px;top:133.42px;line-height:17px;white-space:pre">dindex_1</div><div class="m" style="position:absolute;left:219.95px;top:133.42px;line-height:17px;white-space:pre">'xts' num [1:2292, 1:6] 678 675 678 677 677 ...</div><div style="position:absolute;left:748.74px;top:134.02px;width:13.10px;height:12.70px;background:#f2f2f2;border-radius:1.5px"></div><div style="position:absolute;left:0;top:172.09px;width:100%;height:1px;background:rgba(0,0,0,0.18)"></div><svg style="position:absolute;left:4.44px;top:155.04px" width="13" height="13" viewBox="0 0 12.2 12.2"><circle cx="6.1" cy="6.1" r="5.6" fill="#b0cdf0" stroke="#86abdc" stroke-width="0.9"/><path d="M4.6 3.6 L8.8 6.1 L4.6 8.6Z" fill="#eaf3fc"/></svg><div class="m" style="position:absolute;left:19.76px;top:154.74px;line-height:17px;white-space:pre">dreit</div><div class="m" style="position:absolute;left:219.95px;top:154.74px;line-height:17px;white-space:pre">'xts' num [1:2475, 1:6] 15 15 15 14.2 15.1 ...</div><div style="position:absolute;left:748.74px;top:155.34px;width:13.10px;height:12.70px;background:#f2f2f2;border-radius:1.5px"></div><div style="position:absolute;left:0;top:193.41px;width:100%;height:1px;background:rgba(0,0,0,0.18)"></div><svg style="position:absolute;left:4.44px;top:176.35px" width="13" height="13" viewBox="0 0 12.2 12.2"><circle cx="6.1" cy="6.1" r="5.6" fill="#b0cdf0" stroke="#86abdc" stroke-width="0.9"/><path d="M4.6 3.6 L8.8 6.1 L4.6 8.6Z" fill="#eaf3fc"/></svg><div class="m" style="position:absolute;left:19.76px;top:176.05px;line-height:17px;white-space:pre">dreit_1</div><div class="m" style="position:absolute;left:219.95px;top:176.05px;line-height:17px;white-space:pre">'xts' num [1:2475, 1:6] 15 15 15 14.2 15.1 ...</div><div style="position:absolute;left:748.74px;top:176.65px;width:13.10px;height:12.70px;background:#f2f2f2;border-radius:1.5px"></div><div style="position:absolute;left:0;top:214.73px;width:100%;height:1px;background:rgba(0,0,0,0.18)"></div><svg style="position:absolute;left:4.44px;top:197.67px" width="13" height="13" viewBox="0 0 12.2 12.2"><circle cx="6.1" cy="6.1" r="5.6" fill="#b0cdf0" stroke="#86abdc" stroke-width="0.9"/><path d="M4.6 3.6 L8.8 6.1 L4.6 8.6Z" fill="#eaf3fc"/></svg><div class="m" style="position:absolute;left:19.76px;top:197.37px;line-height:17px;white-space:pre">dsoy</div><div class="m" style="position:absolute;left:219.95px;top:197.37px;line-height:17px;white-space:pre">An xts object on 2013-02-01 / 2022-11-29 containing:</div><div style="position:absolute;left:748.74px;top:197.97px;width:13.10px;height:12.70px;background:#f2f2f2;border-radius:1.5px"></div><div style="position:absolute;left:0;top:236.05px;width:100%;height:1px;background:rgba(0,0,0,0.18)"></div><svg style="position:absolute;left:4.44px;top:218.99px" width="13" height="13" viewBox="0 0 12.2 12.2"><circle cx="6.1" cy="6.1" r="5.6" fill="#b0cdf0" stroke="#86abdc" stroke-width="0.9"/><path d="M4.6 3.6 L8.8 6.1 L4.6 8.6Z" fill="#eaf3fc"/></svg><div class="m" style="position:absolute;left:19.76px;top:218.69px;line-height:17px;white-space:pre">dsoy_1</div><div class="m" style="position:absolute;left:219.95px;top:218.69px;line-height:17px;white-space:pre">'xts' num [1:2473, 1:6] 1470 1484 1488 1495 1488 ...</div><div style="position:absolute;left:748.74px;top:219.29px;width:13.10px;height:12.70px;background:#f2f2f2;border-radius:1.5px"></div><div style="position:absolute;left:0;top:257.37px;width:100%;height:1px;background:rgba(0,0,0,0.18)"></div><svg style="position:absolute;left:4.44px;top:240.31px" width="13" height="13" viewBox="0 0 12.2 12.2"><circle cx="6.1" cy="6.1" r="5.6" fill="#b0cdf0" stroke="#86abdc" stroke-width="0.9"/><path d="M4.6 3.6 L8.8 6.1 L4.6 8.6Z" fill="#eaf3fc"/></svg><div class="m" style="position:absolute;left:19.76px;top:240.01px;line-height:17px;white-space:pre">dsoy_d</div><div class="m" style="position:absolute;left:219.95px;top:240.01px;line-height:17px;white-space:pre">An xts object on 2012-01-03 / 2022-12-30 containing:</div><div style="position:absolute;left:748.74px;top:240.61px;width:13.10px;height:12.70px;background:#f2f2f2;border-radius:1.5px"></div><div style="position:absolute;left:0;top:278.69px;width:100%;height:1px;background:rgba(0,0,0,0.18)"></div><svg style="position:absolute;left:4.44px;top:261.63px" width="13" height="13" viewBox="0 0 12.2 12.2"><circle cx="6.1" cy="6.1" r="5.6" fill="#b0cdf0" stroke="#86abdc" stroke-width="0.9"/><path d="M4.6 3.6 L8.8 6.1 L4.6 8.6Z" fill="#eaf3fc"/></svg><div class="m" style="position:absolute;left:19.76px;top:261.33px;line-height:17px;white-space:pre">dsoy_d_1</div><div class="m" style="position:absolute;left:219.95px;top:261.33px;line-height:17px;white-space:pre">An xts object on 2012-01-03 / 2022-12-30 containing:</div><div style="position:absolute;left:748.74px;top:261.93px;width:13.10px;height:12.70px;background:#f2f2f2;border-radius:1.5px"></div></div>
<div style="position:absolute;left:721.73px;top:423.76px;width:781.40px;height:24.19px;background:#29313b;border-radius:4px 4px 0 0;"></div>
<div style="position:absolute;left:721.73px;top:424.37px;width:40.32px;height:23.18px;background:#373f48;box-shadow:inset 0 0 0 0.6px #252c35;border-radius:2px 2px 0 0;"></div>
<div style="position:absolute;left:729.79px;top:428.06px;height:16px;line-height:16px;white-space:pre;font-family:'Liberation Sans', sans-serif;font-size:11.8px;color:#fff;-webkit-text-stroke:0.25px;letter-spacing:-0.225px;-webkit-text-stroke:0.55px;">Files</div>
<div style="position:absolute;left:763.86px;top:423.76px;width:42.94px;height:24.60px;background:#4c5662;border-radius:3px 3px 0 0;"></div>
<div style="position:absolute;left:773.74px;top:428.06px;height:16px;line-height:16px;white-space:pre;font-family:'Liberation Sans', sans-serif;font-size:11.8px;color:#fff;-webkit-text-stroke:0.25px;letter-spacing:-0.328px;-webkit-text-stroke:0.55px;">Plots</div>
<div style="position:absolute;left:809.02px;top:424.37px;width:66.53px;height:23.18px;background:#373f48;box-shadow:inset 0 0 0 0.6px #252c35;border-radius:2px 2px 0 0;"></div>
<div style="position:absolute;left:817.49px;top:428.06px;height:16px;line-height:16px;white-space:pre;font-family:'Liberation Sans', sans-serif;font-size:11.8px;color:#fff;-webkit-text-stroke:0.25px;letter-spacing:-0.304px;-webkit-text-stroke:0.55px;">Packages</div>
<div style="position:absolute;left:877.77px;top:424.37px;width:39.92px;height:23.18px;background:#373f48;box-shadow:inset 0 0 0 0.6px #252c35;border-radius:2px 2px 0 0;"></div>
<div style="position:absolute;left:885.43px;top:428.06px;height:16px;line-height:16px;white-space:pre;font-family:'Liberation Sans', sans-serif;font-size:11.8px;color:#fff;-webkit-text-stroke:0.25px;letter-spacing:-0.120px;-webkit-text-stroke:0.55px;">Help</div>
<div style="position:absolute;left:919.90px;top:424.37px;width:53.83px;height:23.18px;background:#373f48;box-shadow:inset 0 0 0 0.6px #252c35;border-radius:2px 2px 0 0;"></div>
<div style="position:absolute;left:929.38px;top:428.06px;height:16px;line-height:16px;white-space:pre;font-family:'Liberation Sans', sans-serif;font-size:11.8px;color:#fff;-webkit-text-stroke:0.25px;letter-spacing:-0.029px;-webkit-text-stroke:0.55px;">Viewer</div>
<div style="position:absolute;left:975.74px;top:424.37px;width:84.67px;height:23.18px;background:#373f48;box-shadow:inset 0 0 0 0.6px #252c35;border-radius:2px 2px 0 0;"></div>
<div style="position:absolute;left:983.00px;top:428.06px;height:16px;line-height:16px;white-space:pre;font-family:'Liberation Sans', sans-serif;font-size:11.8px;color:#fff;-webkit-text-stroke:0.25px;letter-spacing:0.039px;-webkit-text-stroke:0.55px;">Presentation</div>
<div style="position:absolute;left:721.73px;top:447.96px;width:781.40px;height:20.56px;background:#4c5662;"></div>
<svg style="position:absolute;left:728.58px;top:452.79px;overflow:visible" width="13.71" height="11.29" viewBox="0 0 13.6 11.2"><path d="M0.6 5.6 L6.4 0.4 V2.8 H13 V8.4 H6.4 V10.8 Z" fill="#7fb2e6" stroke="#4a86c4" stroke-width="0.7"/></svg>
<svg style="position:absolute;left:753.78px;top:452.79px;overflow:visible" width="13.71" height="11.29" viewBox="0 0 13.6 11.2"><path d="M13 5.6 L7.2 0.4 V2.8 H0.6 V8.4 H7.2 V10.8 Z" fill="#78828d" stroke="#6a747f" stroke-width="0.7"/></svg>
<div style="position:absolute;left:774.35px;top:451.18px;width:1.61px;height:14.52px;background:#27303a;"></div>
<svg style="position:absolute;left:784.22px;top:450.78px;overflow:visible" width="13.31" height="14.92" viewBox="0 0 13.2 14.8"><circle cx="8" cy="5" r="3.9" fill="#b9d6f0" stroke="#e6ebf0" stroke-width="1.2"/><path d="M5.2 7.8 L1 13.4" stroke="#b08a4f" stroke-width="2.2" stroke-linecap="round"/></svg>
<div style="position:absolute;left:804.79px;top:450.44px;height:16px;line-height:16px;white-space:pre;font-family:'Liberation Sans', sans-serif;font-size:11.8px;color:#fff;-webkit-text-stroke:0.25px;letter-spacing:-0.233px;-webkit-text-stroke:0.55px;">Zoom</div>
<div style="position:absolute;left:844.91px;top:451.18px;width:1.61px;height:14.52px;background:#27303a;"></div>
<svg style="position:absolute;left:852.36px;top:451.18px;overflow:visible" width="16.13" height="14.11" viewBox="0 0 16 14"><rect x="3.4" y="1.6" width="12" height="11" fill="#dfe9f2" stroke="#8e98a3" stroke-width="0.7"/><path d="M4 11.6 l3.4 -4 l2.6 2.4 l2.2 -2.8 l2.6 4.4z" fill="#6fae6f"/><circle cx="12" cy="5" r="1.4" fill="#e9c76b"/><path d="M0.4 4.4 h4.4 v-2.4 l3.8 3.6 l-3.8 3.6 v-2.4 h-4.4z" fill="#f4f5f6" stroke="#59636f" stroke-width="0.5"/></svg>
<div style="position:absolute;left:871.92px;top:450.44px;height:16px;line-height:16px;white-space:pre;font-family:'Liberation Sans', sans-serif;font-size:11.8px;color:#fff;-webkit-text-stroke:0.25px;letter-spacing:0.061px;-webkit-text-stroke:0.55px;">Export</div>
<svg style="position:absolute;left:912.64px;top:457.63px;overflow:visible" width="6.05" height="3.33" viewBox="0 0 6 3.3"><path d="M0 0 L6 0 L3 3.3 Z" fill="#dfe3e8"/></svg>
<div style="position:absolute;left:925.55px;top:451.18px;width:1.61px;height:14.52px;background:#27303a;"></div>
<svg style="position:absolute;left:933.41px;top:451.18px;overflow:visible" width="16.73" height="14.11" viewBox="0 0 16.6 14"><rect x="4.4" y="0.6" width="11.6" height="12.8" fill="#f4f5f6" stroke="#9aa3ad" stroke-width="0.7"/><path d="M1.4 3.4 L8.6 10.6 M8.6 3.4 L1.4 10.6" stroke="#d2322d" stroke-width="2.4" stroke-linecap="round"/></svg>
<div style="position:absolute;left:957.80px;top:451.18px;width:1.61px;height:14.52px;background:#27303a;"></div>
<div style="position:absolute;left:1414.43px;top:450.44px;height:16px;line-height:16px;white-space:pre;font-family:'Liberation Sans', sans-serif;font-size:11.8px;color:#fff;-webkit-text-stroke:0.25px;letter-spacing:-0.057px;-webkit-text-stroke:0.55px;">Publish</div>
<svg style="position:absolute;left:1462.61px;top:457.63px;overflow:visible" width="6.05" height="3.33" viewBox="0 0 6 3.3"><path d="M0 0 L6 0 L3 3.3 Z" fill="#dfe3e8"/></svg>
<div style="position:absolute;left:1475.91px;top:451.18px;width:1.61px;height:14.52px;background:#27303a;"></div>
<svg style="position:absolute;left:1483.37px;top:451.38px;overflow:visible" width="14.11" height="13.71" viewBox="0 0 13.4 13.2"><path d="M10.4 3.6 A4.7 4.7 0 1 0 11.2 8.6" fill="none" stroke="#e6eaee" stroke-width="2.9"/><path d="M7.6 0.2 L13.2 0.2 L13.2 6.2Z" fill="#e6eaee"/></svg>
<div style="position:absolute;left:721.73px;top:468.52px;width:781.40px;height:504.60px;background:#fff;"></div>
<svg style="position:absolute;left:0;top:0" width="1512" height="982" viewBox="0 0 750 487.1032"><g fill="none" stroke="#000" stroke-width="0.5"><rect x="406.3" y="280.5" width="319.30" height="144.80" stroke="#4a4a4a"/><path d="M406.3 352.9 H725.6" stroke="#6a6a6a" stroke-width="1.0"/><polyline points="418.00,296.20 424.88,304.20 431.77,282.40 438.65,283.20 445.54,310.40 452.43,314.60 459.31,308.50 466.19,307.60 473.08,313.30 479.96,338.80 486.85,349.40 493.74,348.10 500.62,343.30 507.50,347.30 514.39,347.30 521.27,347.30 528.16,347.30 535.04,350.50 541.93,349.40 548.82,336.90 555.70,342.20 562.59,341.20 569.47,345.20 576.36,341.70 583.24,338.20 590.12,342.00 597.01,326.50 603.89,345.70 610.78,348.40 617.66,348.10 624.55,338.20 631.43,340.60 638.32,335.30 645.20,344.60 652.09,302.40 658.98,302.10 665.86,310.90 672.75,312.50 679.63,293.10 686.51,300.40 693.40,303.20 700.28,291.20 707.17,300.00 714.06,308.80"/><polyline points="418.00,361.20 424.88,367.10 431.77,368.10 438.65,366.00 445.54,366.80 452.43,364.40 459.31,363.60 466.19,366.00 473.08,364.40 479.96,372.40 486.85,369.50 493.74,368.10 500.62,388.40 507.50,393.30 514.39,393.30 521.27,390.10 528.16,359.60 535.04,358.00 541.93,355.30 548.82,355.30 555.70,365.50 562.59,364.40 569.47,364.40 576.36,364.40 583.24,376.10 590.12,366.50 597.01,369.20 603.89,371.60 610.78,380.90 617.66,379.30 624.55,382.00 631.43,380.40 638.32,384.40 645.20,379.60 652.09,380.40 658.98,381.60 665.86,402.40 672.75,402.50 679.63,406.10 686.51,409.60 693.40,420.80 700.28,412.20 707.17,415.70 714.06,423.20"/><path d="M406.3 288.2 h-4.6"/><path d="M406.3 304.9 h-4.6"/><path d="M406.3 321.6 h-4.6"/><path d="M406.3 338.3 h-4.6"/><path d="M406.3 361.6 h-4.6"/><path d="M406.3 378.3 h-4.6"/><path d="M406.3 395.0 h-4.6"/><path d="M406.3 411.6 h-4.6"/><path d="M418.00 425.3 v4.7"/><path d="M473.08 425.3 v4.7"/><path d="M528.16 425.3 v4.7"/><path d="M583.24 425.3 v4.7"/><path d="M638.32 425.3 v4.7"/><path d="M693.40 425.3 v4.7"/></g><g font-family="Liberation Sans, sans-serif" font-size="7.9" fill="#000" text-anchor="middle"><text x="418.00" y="443.7">2000</text><text x="473.08" y="443.7">2002</text><text x="528.16" y="443.7">2004</text><text x="583.24" y="443.7">2006</text><text x="638.32" y="443.7">2008</text><text x="693.40" y="443.7">2010</text><text x="566.2" y="462.3">Time</text><text transform="translate(395.3,304.9) rotate(-90)">1400</text><text transform="translate(395.3,338.3) rotate(-90)">1000</text><text transform="translate(395.3,361.6) rotate(-90)">4.5e+09</text><text transform="translate(395.3,411.6) rotate(-90)">3.0e+09</text><text transform="translate(376.1,316.7) rotate(-90)">Price</text><text transform="translate(376.1,389.2) rotate(-90)">Production</text></g><text x="565.7" y="250.3" font-family="Liberation Sans, sans-serif" font-weight="bold" font-size="9.3" text-anchor="middle" fill="#000">qsoy_ts</text></svg>
<svg style="position:absolute;left:0;top:0" width="1512" height="982" viewBox="0 0 750 487.1032"><rect x="6.0" y="21.4" width="5.2" height="6.6" fill="#f3f3f1" stroke="#aeb4ba" stroke-width="0.3"/><path d="M3.3 22.88 H4.38 V21.8 H5.62 V22.88 H6.7 V24.12 H5.62 V25.2 H4.38 V24.12 H3.3Z" fill="#3cb563" stroke="#1d6e38" stroke-width="0.25"/><path d="M3.98 23.5 H6.02 M5.0 22.48 V24.52" stroke="#b9f0cb" stroke-width="0.45"/><circle cx="29.3" cy="25.3" r="3.5" fill="#456e9f" stroke="#84a8cf" stroke-width="0.5"/><path d="M27.2 23.6 q2 -1.4 4 0 q1 2.4 -1 4.4 q-2.4 0.5 -3.4 -1.4z" fill="#5f8fc2"/><path d="M23.5 22.88 H24.58 V21.8 H25.82 V22.88 H26.9 V24.12 H25.82 V25.2 H24.58 V24.12 H23.5Z" fill="#3cb563" stroke="#1d6e38" stroke-width="0.25"/><path d="M24.18 23.5 H26.22 M25.2 22.48 V24.52" stroke="#b9f0cb" stroke-width="0.45"/><path d="M38.6 23.0 h2.6 l0.8 0.8 h3.8 v4.2 h-7.2z" fill="#cfae5a" stroke="#9a7d36" stroke-width="0.25"/><path d="M38.6 28 l1.2 -3.2 h6.6 l-1.2 3.2z" fill="#ecd893" stroke="#9a7d36" stroke-width="0.25"/><path d="M44.2 22.6 h1.8 v-1.0 l1.9 1.6 l-1.9 1.6 v-1.0 h-1.8z" fill="#3cb563" stroke="#1d6e38" stroke-width="0.2"/><g transform="translate(59.6,21.2) scale(0.4571428571428572)"><rect x="0.5" y="0.5" width="13" height="13" rx="1" fill="#94b3e0" stroke="#5f80b4" stroke-width="0.8"/><rect x="3" y="1" width="8" height="5.4" fill="#f2f6fb"/><rect x="3" y="8.5" width="8" height="5" fill="#5577ab"/><rect x="4.2" y="9.5" width="2" height="3" fill="#dfe7f2"/></g><g transform="translate(73.3,20.2) scale(0.39999999999999997)"><rect x="0.5" y="0.5" width="13" height="13" rx="1" fill="#94b3e0" stroke="#5f80b4" stroke-width="0.8"/><rect x="3" y="1" width="8" height="5.4" fill="#f2f6fb"/><rect x="3" y="8.5" width="8" height="5" fill="#5577ab"/><rect x="4.2" y="9.5" width="2" height="3" fill="#dfe7f2"/></g><g transform="translate(71.0,22.0) scale(0.39999999999999997)"><rect x="0.5" y="0.5" width="13" height="13" rx="1" fill="#94b3e0" stroke="#5f80b4" stroke-width="0.8"/><rect x="3" y="1" width="8" height="5.4" fill="#f2f6fb"/><rect x="3" y="8.5" width="8" height="5" fill="#5577ab"/><rect x="4.2" y="9.5" width="2" height="3" fill="#dfe7f2"/></g><rect x="87.8" y="20.6" width="4.6" height="2.4" fill="#f1f1f1" stroke="#8a8a8a" stroke-width="0.25"/><rect x="86.3" y="22.8" width="7.6" height="3.4" rx="0.6" fill="#cfd1d3" stroke="#7a7d80" stroke-width="0.3"/><rect x="87.8" y="25.0" width="4.6" height="2.8" fill="#fafafa" stroke="#8a8a8a" stroke-width="0.25"/><path d="M28.150000000000002 38.75 L31.05 41.650000000000006 M31.05 38.75 L28.150000000000002 41.650000000000006" stroke="#808994" stroke-width="0.7" fill="none"/><path d="M41.800000000000004 35.8 h4.4 l2.0 2.0 v5.6 h-6.4z" fill="#f7f8f9" stroke="#c3c9d0" stroke-width="0.25"/><path d="M46.2 35.8 v2.0 h2.0z" fill="#d9dee4"/><circle cx="43.400000000000006" cy="39.699999999999996" r="1.65" fill="#9fbbe0" stroke="#2f4f80" stroke-width="1.0"/><path d="M136.15 38.75 L139.04999999999998 41.650000000000006 M139.04999999999998 38.75 L136.15 41.650000000000006" stroke="#8f98a2" stroke-width="0.7" fill="none"/><path d="M149.9 35.8 h4.4 l2.0 2.0 v5.6 h-6.4z" fill="#f7f8f9" stroke="#c3c9d0" stroke-width="0.25"/><path d="M154.3 35.8 v2.0 h2.0z" fill="#d9dee4"/><circle cx="151.5" cy="39.699999999999996" r="1.65" fill="#9fbbe0" stroke="#2f4f80" stroke-width="1.0"/><path d="M263.25 38.75 L266.15 41.650000000000006 M266.15 38.75 L263.25 41.650000000000006" stroke="#808994" stroke-width="0.7" fill="none"/><path d="M276.6 35.8 h4.4 l2.0 2.0 v5.6 h-6.4z" fill="#f7f8f9" stroke="#c3c9d0" stroke-width="0.25"/><path d="M281.0 35.8 v2.0 h2.0z" fill="#d9dee4"/><circle cx="278.20000000000005" cy="39.699999999999996" r="1.65" fill="#9fbbe0" stroke="#2f4f80" stroke-width="1.0"/><path d="M322.0 38.2 L324.2 40.4 L322.0 42.6 M324.7 38.2 L326.9 40.4 L324.7 42.6" stroke="#d3d8de" stroke-width="0.95" fill="none"/><rect x="333.0" y="41.199999999999996" width="6.4" height="2.2" rx="0.3" fill="#39424d" stroke="#8f98a3" stroke-width="0.75"/><rect x="342.1" y="38.3" width="6.3" height="5.2" rx="0.3" fill="#333c47" stroke="#8f98a3" stroke-width="0.75"/><rect x="342.1" y="38.3" width="6.3" height="1.0" fill="#8f98a3"/><g transform="translate(48.7,48.0) scale(0.4428571428571429)"><rect x="0.5" y="0.5" width="13" height="13" rx="1" fill="#94b3e0" stroke="#5f80b4" stroke-width="0.8"/><rect x="3" y="1" width="8" height="5.4" fill="#f2f6fb"/><rect x="3" y="8.5" width="8" height="5" fill="#5577ab"/><rect x="4.2" y="9.5" width="2" height="3" fill="#dfe7f2"/></g><path d="M65.75 231.75 L68.65 234.64999999999998 M68.65 231.75 L65.75 234.64999999999998" stroke="#808994" stroke-width="0.7" fill="none"/><path d="M126.05 231.75 L128.95 234.64999999999998 M128.95 231.75 L126.05 234.64999999999998" stroke="#808994" stroke-width="0.7" fill="none"/><rect x="333.7" y="235.0" width="6.4" height="2.2" rx="0.3" fill="#39424d" stroke="#8f98a3" stroke-width="0.75"/><rect x="342.5" y="232.1" width="6.3" height="5.2" rx="0.3" fill="#333c47" stroke="#8f98a3" stroke-width="0.75"/><rect x="342.5" y="232.1" width="6.3" height="1.0" fill="#8f98a3"/><path d="M350.38 240.34 L347.18 244.25" stroke="#d9dde2" stroke-width="0.85" stroke-linecap="round"/><path d="M345.90 243.40 L348.30 245.44 L346.70 248.33 L342.86 247.14 Z" fill="#b7bec6"/><rect x="725.8" y="41.699999999999996" width="6.4" height="2.2" rx="0.3" fill="#39424d" stroke="#8f98a3" stroke-width="0.75"/><rect x="734.5" y="38.8" width="6.3" height="5.2" rx="0.3" fill="#333c47" stroke="#8f98a3" stroke-width="0.75"/><rect x="734.5" y="38.8" width="6.3" height="1.0" fill="#8f98a3"/><path d="M361.2 49.6 h2.4 l0.7 0.8 h3.4 v3.6 h-6.5z" fill="#d4b869" stroke="#9a8240" stroke-width="0.25"/><path d="M361.2 54 l1.1 -2.7 h6.0 l-1.1 2.7z" fill="#efdf9f" stroke="#9a8240" stroke-width="0.25"/><path d="M366.6 49.7 h1.7 v-0.95 l1.8 1.5 l-1.8 1.5 v-0.95 h-1.7z" fill="#46b56a" stroke="#1d6e38" stroke-width="0.2"/><g transform="translate(374.2,48.3) scale(0.41428571428571426)"><rect x="0.5" y="0.5" width="13" height="13" rx="1" fill="#94b3e0" stroke="#5f80b4" stroke-width="0.8"/><rect x="3" y="1" width="8" height="5.4" fill="#f2f6fb"/><rect x="3" y="8.5" width="8" height="5" fill="#5577ab"/><rect x="4.2" y="9.5" width="2" height="3" fill="#dfe7f2"/></g><path d="M503.10 47.50 L500.06 51.00" stroke="#b8904a" stroke-width="0.85" stroke-linecap="round"/><path d="M498.84 50.24 L501.12 52.06 L499.60 54.65 L495.95 53.58 Z" fill="#d2ad5e"/><rect x="381.2" y="57.7" width="3.6" height="3.6" fill="#a98cc4" stroke="#7c5f9c" stroke-width="0.2"/><rect x="379.2" y="59.8" width="4.2" height="4.4" fill="#bcc870" stroke="#8a9440" stroke-width="0.2"/><rect x="382.6" y="60.6" width="4.2" height="4.2" fill="#7388cc" stroke="#4a5ea0" stroke-width="0.2"/><rect x="725.6" y="217.70000000000002" width="6.4" height="2.2" rx="0.3" fill="#39424d" stroke="#8f98a3" stroke-width="0.75"/><rect x="734.3" y="214.8" width="6.3" height="5.2" rx="0.3" fill="#333c47" stroke="#8f98a3" stroke-width="0.75"/><rect x="734.3" y="214.8" width="6.3" height="1.0" fill="#8f98a3"/><path d="M485.32 223.70 L482.56 227.20" stroke="#b8904a" stroke-width="0.85" stroke-linecap="round"/><path d="M481.46 226.44 L483.53 228.26 L482.15 230.85 L478.84 229.78 Z" fill="#d2ad5e"/><g fill="none" stroke="#3f8bd0" stroke-width="1.0" stroke-linecap="round"><path d="M692.9 226.6 a3.0 3.0 0 0 1 5.2 -1.6"/><path d="M698.7 227.4 a3.0 3.0 0 0 1 -5.2 1.6"/><path d="M694.3 227.6 q0.8 -1.6 1.6 -0.6 q0.8 1.0 1.6 -0.6"/></g></svg>
</div></body></html>
